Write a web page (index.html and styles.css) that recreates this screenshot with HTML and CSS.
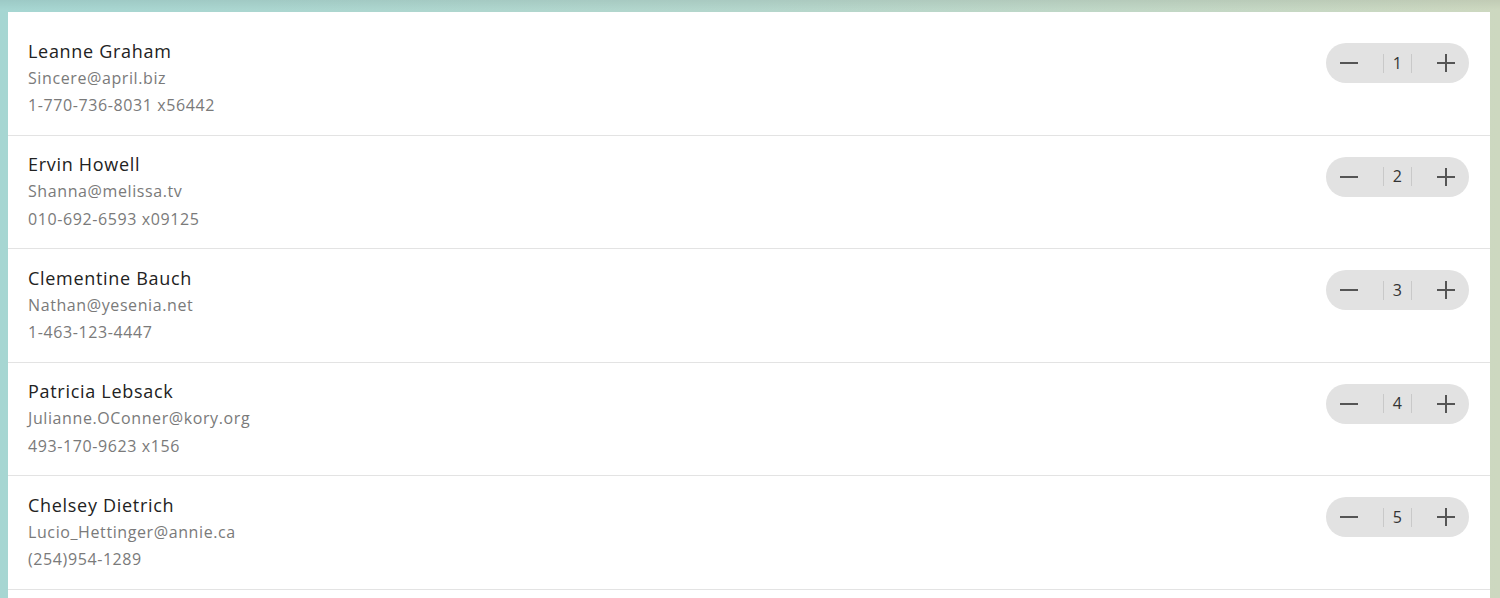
FILE: index.html
```html
<!DOCTYPE html>
<html>
<head>
<meta charset="utf-8">
<link rel="stylesheet" href="styles.css">
</head>
<body>
<div class="page">
  <ul class="list">
    <li class="row">
      <div class="info">
        <div class="name">Leanne Graham</div>
        <div class="meta">Sincere@april.biz</div>
        <div class="meta">1-770-736-8031 x56442</div>
      </div>
      <div class="stepper">
        <button class="btn"><svg viewBox="0 0 18 18"><path d="M0 9h18"/></svg></button>
        <span class="count">1</span>
        <button class="btn"><svg viewBox="0 0 18 18"><path d="M0 9h18M9 0v18"/></svg></button>
      </div>
    </li>
    <li class="row">
      <div class="info">
        <div class="name">Ervin Howell</div>
        <div class="meta">Shanna@melissa.tv</div>
        <div class="meta">010-692-6593 x09125</div>
      </div>
      <div class="stepper">
        <button class="btn"><svg viewBox="0 0 18 18"><path d="M0 9h18"/></svg></button>
        <span class="count">2</span>
        <button class="btn"><svg viewBox="0 0 18 18"><path d="M0 9h18M9 0v18"/></svg></button>
      </div>
    </li>
    <li class="row">
      <div class="info">
        <div class="name">Clementine Bauch</div>
        <div class="meta">Nathan@yesenia.net</div>
        <div class="meta">1-463-123-4447</div>
      </div>
      <div class="stepper">
        <button class="btn"><svg viewBox="0 0 18 18"><path d="M0 9h18"/></svg></button>
        <span class="count">3</span>
        <button class="btn"><svg viewBox="0 0 18 18"><path d="M0 9h18M9 0v18"/></svg></button>
      </div>
    </li>
    <li class="row">
      <div class="info">
        <div class="name">Patricia Lebsack</div>
        <div class="meta">Julianne.OConner@kory.org</div>
        <div class="meta">493-170-9623 x156</div>
      </div>
      <div class="stepper">
        <button class="btn"><svg viewBox="0 0 18 18"><path d="M0 9h18"/></svg></button>
        <span class="count">4</span>
        <button class="btn"><svg viewBox="0 0 18 18"><path d="M0 9h18M9 0v18"/></svg></button>
      </div>
    </li>
    <li class="row">
      <div class="info">
        <div class="name">Chelsey Dietrich</div>
        <div class="meta">Lucio_Hettinger@annie.ca</div>
        <div class="meta">(254)954-1289</div>
      </div>
      <div class="stepper">
        <button class="btn"><svg viewBox="0 0 18 18"><path d="M0 9h18"/></svg></button>
        <span class="count">5</span>
        <button class="btn"><svg viewBox="0 0 18 18"><path d="M0 9h18M9 0v18"/></svg></button>
      </div>
    </li>
  </ul>
</div>
</body>
</html>
```
FILE: styles.css
```css
html, body {
  margin: 0;
  padding: 0;
  height: 100%;
  overflow: hidden;
}
body {
  background: linear-gradient(to right, #a6d6d2 0%, #b4d6cc 50%, #cdd8c0 100%);
  font-family: "Open Sans", "Liberation Sans", sans-serif;
}
.page {
  padding: 12px 10px 0 8px;
  position: relative;
  height: 100%;
  box-sizing: border-box;
}
.page::before {
  content: "";
  position: absolute;
  left: 0; right: 0; top: 0;
  height: 10px;
  background: linear-gradient(to bottom, rgba(0,0,0,0.06), rgba(0,0,0,0));
}
.list {
  list-style: none;
  margin: 0;
  padding: 10px 0 0 0;
  background: #fff;
  height: 100%;
  box-sizing: border-box;
}
.row {
  display: flex;
  justify-content: space-between;
  align-items: flex-start;
  padding: 15.5px 21px 16px 20px;
  border-bottom: 1px solid #e3e3e3;
  height: 81px;
}
.name {
  font-size: 18px;
  line-height: 27px;
  color: #222;
  letter-spacing: 0.7px;
}
.meta {
  font-size: 16px;
  line-height: 27.5px;
  color: #7a7a7a;
  letter-spacing: 0.6px;
}
.stepper {
  margin-top: 5.5px;
  display: flex;
  align-items: center;
  height: 40px;
  background: #e2e2e2;
  border-radius: 20px;
}
.btn {
  width: 46px;
  height: 40px;
  border: 0;
  background: transparent;
  padding: 0;
  display: flex;
  align-items: center;
  justify-content: center;
}
.btn svg {
  width: 18px;
  height: 18px;
  stroke: #555;
  stroke-width: 2;
  fill: none;
}
.count {
  margin: 0 11px;
  padding: 0 9px;
  height: 19px;
  line-height: 19px;
  border-left: 1px solid #c9c9c9;
  border-right: 1px solid #c9c9c9;
  font-size: 16px;
  color: #333;
}
```
